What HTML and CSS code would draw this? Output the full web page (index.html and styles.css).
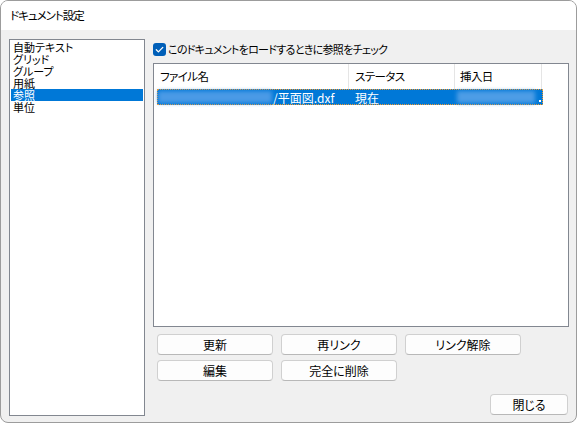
FILE: index.html
```html
<!DOCTYPE html>
<html lang="ja">
<head>
<meta charset="utf-8">
<link rel="stylesheet" href="styles.css">
</head>
<body>
<div class="window">
  <div class="titlebar"><span class="title">ドキュメント設定</span></div>
  <div class="content">
    <ul class="cats">
      <li>自動テキスト</li>
      <li>グリッド</li>
      <li>グループ</li>
      <li>用紙</li>
      <li class="sel">参照</li>
      <li>単位</li>
    </ul>
    <div class="main">
      <div class="check">
        <span class="box"><svg width="13" height="13" viewBox="0 0 13 13"><path d="M3.3 6.8 L5.4 8.9 L9.8 4.4" fill="none" stroke="#fff" stroke-width="1.3" stroke-linecap="round" stroke-linejoin="round"/></svg></span>
        <span class="check-label">このドキュメントをロードするときに参照をチェック</span>
      </div>
      <div class="table">
        <div class="thead">
          <div class="th c1">ファイル名</div>
          <div class="th c2">ステータス</div>
          <div class="th c3">挿入日</div>
        </div>
        <div class="row">
          <div class="td c1"><span class="blur"></span><span class="fname">/平面図.dxf</span></div>
          <div class="td c2">現在</div>
          <div class="td c3"><span class="blur blur3"></span><span class="dot"></span></div>
        </div>
      </div>
      <div class="btns">
        <div class="btnrow">
          <button class="btn">更新</button>
          <button class="btn">再リンク</button>
          <button class="btn">リンク解除</button>
        </div>
        <div class="btnrow">
          <button class="btn">編集</button>
          <button class="btn">完全に削除</button>
        </div>
      </div>
      <div class="footer"><button class="btn close">閉じる</button></div>
    </div>
  </div>
</div>
</body>
</html>
```
FILE: styles.css
```css
* { box-sizing: border-box; }
html, body { margin: 0; padding: 0; background: #ffffff; }
body {
  font-family: "Noto Sans CJK JP", "Noto Sans", sans-serif;
  font-size: 12px;
  color: #000;
  font-feature-settings: "palt";
}
.window {
  width: 577px;
  height: 423px;
  border: 1px solid #9c9c9c;
  border-radius: 8px;
  overflow: hidden;
  background: #f0f0f0;
  display: flex;
  flex-direction: column;
}
.titlebar {
  height: 29px;
  background: #ffffff;
  display: flex;
  align-items: center;
  padding-left: 9px;
  flex: none;
}
.title { font-size: 11.5px; letter-spacing: -1px; line-height: 14px; padding-bottom: 1px; }
.content {
  display: flex;
  padding: 9px 0 0 8px;
  flex: 1;
}
.cats {
  list-style: none;
  margin: 0;
  padding: 1px 1px 0 1px;
  width: 136px;
  height: 377px;
  background: #fff;
  border: 1px solid #828790;
  flex: none;
}
.cats li {
  height: 12px;
  line-height: 12px;
  font-size: 11px;
  padding-left: 2px;
  white-space: nowrap;
}
.cats li.sel { background: #0078d7; color: #fff; }
.main {
  margin-left: 8px;
  width: 416px;
  display: flex;
  flex-direction: column;
}
.check {
  height: 24px;
  display: flex;
  align-items: flex-start;
  padding-top: 4px;
}
.box {
  width: 13px;
  height: 13px;
  border-radius: 3px;
  background: #005fb8;
  display: block;
  flex: none;
}
.box svg { display: block; }
.check-label { margin-left: 2px; line-height: 13px; font-size: 11px; letter-spacing: -0.7px; }
.table {
  height: 264px;
  border: 1px solid #828790;
  background: #fff;
  flex: none;
}
.thead { display: flex; height: 25px; }
.th {
  line-height: 24px;
  padding-left: 6px;
  border-right: 1px solid #e5e5e5;
  white-space: nowrap;
  font-size: 11.5px;
  letter-spacing: -0.6px;
}
.thead .c1 { width: 195px; }
.thead .c2 { width: 106px; }
.thead .c3 { width: 87px; padding-left: 5px; }
.row {
  display: flex;
  margin-left: 3px;
  width: 386px;
  height: 16px;
  background: #0078d7;
  color: #fff;
  outline: 1px dotted #f29a2e;
  outline-offset: -1px;
}
.td { height: 16px; line-height: 15px; white-space: nowrap; display: flex; align-items: center; }
.row .c1 { width: 191px; padding-left: 1px; }
.row .c2 { width: 106px; padding-left: 7px; }
.row .c3 { width: 89px; justify-content: flex-end; padding-right: 2px; }
.blur {
  display: block;
  width: 114px;
  height: 12px;
  background: #4a9ae6;
  filter: blur(2px);
  flex: none;
}
.blur3 { width: 78px; margin-right: 4px; background: #4d9de6; }
.fname { margin-left: 1px; }
.dot { display: block; width: 2px; height: 2px; background: #fff; margin-top: 7px; }
.btns { margin-top: 7px; padding-left: 4px; display: flex; flex-direction: column; gap: 5px; }
.btnrow { display: flex; gap: 8px; }
.btn {
  font-family: inherit;
  font-size: 12px;
  font-feature-settings: "palt";
  width: 116px;
  height: 21px;
  padding: 0;
  margin: 0;
  background: #fdfdfd;
  border: 1px solid #d0d0d0;
  border-bottom-color: #b8b8b8;
  border-radius: 4px;
  color: #000;
  line-height: 18px;
}
.footer { margin-top: 13px; display: flex; justify-content: flex-end; padding-right: 1px; }
.close { width: 78px; }
```
